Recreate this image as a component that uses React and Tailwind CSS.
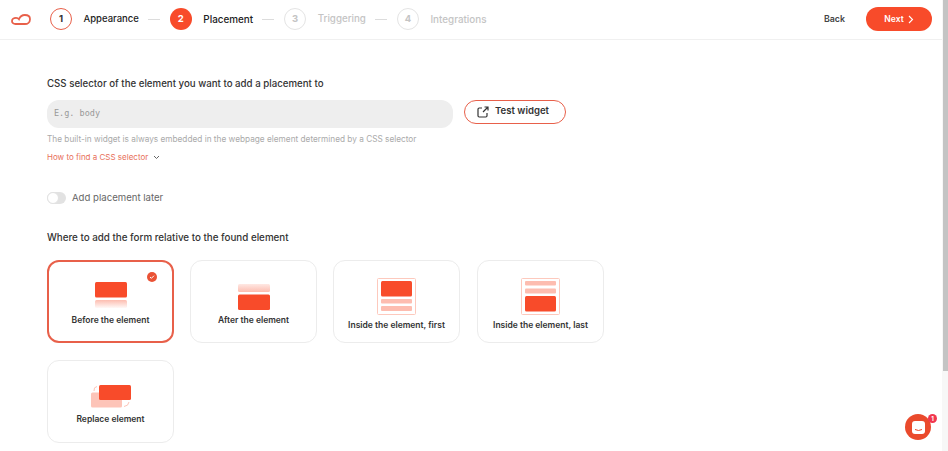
import React from "react";

const F = { fontFamily: '"Inter", "Noto Sans", sans-serif' };

function Step({ n, label, state, size }) {
  const circle =
    state === "done"
      ? "border border-[#e8604a] text-[#333] bg-white"
      : state === "active"
      ? "bg-[#f84b2a] text-white"
      : "border border-[#e4e4e4] text-[#c4c4c4] bg-white";
  const text = state === "todo" ? "text-[#c4c4c4]" : "text-[#222]";
  return (
    <div className="flex items-center">
      <div className={`w-[22px] h-[22px] rounded-full flex items-center justify-center text-[9.5px] font-bold ${circle}`}>{n}</div>
      <span className={`ml-[11.5px] font-medium ${size} ${text}`}>{label}</span>
    </div>
  );
}

function Dash() {
  return <div className="w-[12px] h-[1px] bg-[#dcdcdc] ml-[9px] mr-[10px]" />;
}

function Card({ label, selected, icon, iconGap, labelGap }) {
  return (
    <div
      className={`relative w-[127px] h-[83px] rounded-[12px] bg-white flex flex-col items-center shrink-0 ${
        selected ? "border-2 border-[#e8604a]" : "border border-[#ececec]"
      }`}
    >
      {selected && (
        <div className="absolute top-[10px] right-[15px] w-[10px] h-[10px] rounded-full bg-[#ea5235] flex items-center justify-center">
          <svg width="6" height="6" viewBox="0 0 6 6" fill="none"><path d="M1 3l1.400 1.300L5 1.700" stroke="#fff" strokeWidth="1" /></svg>
        </div>
      )}
      <div className={`flex justify-center ${iconGap}`}>{icon}</div>
      <div className={`text-[8.5px] font-semibold text-[#333] whitespace-nowrap ${labelGap}`}>{label}</div>
    </div>
  );
}

const Before = (
  <svg className="block" width="32" height="27" viewBox="0 0 32 27">
    <defs>
      <linearGradient id="fb" x1="0" y1="0" x2="0" y2="1"><stop offset="0" stopColor="#fdbdb0" /><stop offset="1" stopColor="#fdbdb0" stopOpacity="0.1" /></linearGradient>
    </defs>
    <rect x="0" y="0" width="32" height="15.500" rx="1.500" fill="#f84b2a" />
    <rect x="0" y="18" width="32" height="8" rx="1.500" fill="url(#fb)" />
  </svg>
);
const After = (
  <svg className="block" width="32" height="27" viewBox="0 0 32 27">
    <defs>
      <linearGradient id="fa" x1="0" y1="1" x2="0" y2="0"><stop offset="0" stopColor="#fdbdb0" /><stop offset="1" stopColor="#fdbdb0" stopOpacity="0.35" /></linearGradient>
    </defs>
    <rect x="0" y="0" width="32" height="8" rx="1.500" fill="url(#fa)" />
    <rect x="0" y="10.500" width="32" height="15.500" rx="1.500" fill="#f84b2a" />
  </svg>
);
const First = (
  <svg className="block" width="39" height="37" viewBox="0 0 39 37">
    <rect x="0.500" y="0.500" width="38" height="36" rx="1" fill="#fff" stroke="#fdc9bd" />
    <rect x="4" y="3" width="31" height="15.500" rx="1.500" fill="#f84b2a" />
    <rect x="4" y="21" width="31" height="4.500" rx="1" fill="#fdbdb0" />
    <rect x="4" y="28" width="31" height="5" rx="1" fill="#fdbdb0" />
  </svg>
);
const Last = (
  <svg className="block" width="39" height="37" viewBox="0 0 39 37">
    <rect x="0.500" y="0.500" width="38" height="36" rx="1" fill="#fff" stroke="#fdc9bd" />
    <rect x="4" y="3" width="31" height="4.500" rx="1" fill="#fdbdb0" />
    <rect x="4" y="10.500" width="31" height="5" rx="1" fill="#fdbdb0" />
    <rect x="4" y="18" width="31" height="15.500" rx="1.500" fill="#f84b2a" />
  </svg>
);
const Replace = (
  <svg className="block" width="40" height="23" viewBox="0 0 40 23">
    <rect x="0" y="7.500" width="31" height="15" rx="1.500" fill="#fdc4b8" />
    <rect x="8" y="0" width="32" height="15" rx="1.500" fill="#f84b2a" />
    <path d="M3 6 Q2.500 2 6 1.500" stroke="#fdc4b8" fill="none" strokeWidth="1" />
    <path d="M38 17 Q37.500 21 33 21.500" stroke="#fdc4b8" fill="none" strokeWidth="1" />
  </svg>
);

export default function App() {
  return (
    <div className="relative w-[948px] h-[451px] overflow-hidden bg-white flex" style={F}>
      <div className="w-[942px] h-full flex flex-col shrink-0">
        <header className="h-[40px] border-b border-[#f0f0f0] flex items-center shrink-0 pb-[1px]">
          <svg className="ml-[11px] shrink-0" width="20" height="11" viewBox="0 0 20 11" fill="none">
            <path d="M5 3.800 C6.500 3.800 7.500 4.500 8 5.200 C9 2.600 11 1 13.800 1 C16.800 1 19 2.600 19 5.200 C19 8.200 16.600 10 14 10 L4.500 10 C2.400 10 1 8.800 1 6.900 C1 5 2.800 3.800 5 3.800 Z" stroke="#e8604a" strokeWidth="1.800" />
          </svg>
          <div className="ml-[19px] flex items-center">
            <Step n="1" label="Appearance" state="done" size="text-[9.5px]" />
            <Dash />
            <Step n="2" label="Placement" state="active" size="text-[9.9px]" />
            <Dash />
            <Step n="3" label="Triggering" state="todo" size="text-[9.75px]" />
            <Dash />
            <Step n="4" label="Integrations" state="todo" size="text-[9.85px]" />
          </div>
          <span className="ml-auto text-[8.800px] font-semibold text-[#444]">Back</span>
          <button className="ml-[21px] mr-[10px] w-[66px] h-[24px] rounded-full bg-[#f84b2a] text-white text-[8.500px] font-semibold flex items-center justify-center gap-[4px]">
            Next
            <svg width="6" height="9" viewBox="0 0 6 9" fill="none"><path d="M1 1l3.500 3.500L1 8" stroke="#fff" strokeWidth="1.100" /></svg>
          </button>
        </header>
        <main className="pl-[47px] flex flex-col items-start">
          <div className="mt-[37px] text-[9.700px] font-medium text-[#333] leading-[13px]">CSS selector of the element you want to add a placement to</div>
          <div className="mt-[10px] flex items-start">
            <div className="w-[406px] h-[28px] rounded-[12px] bg-[#eeeeee] flex items-center pl-[7px] pb-[2px] text-[8.500px] text-[#999]" style={{ fontFamily: '"DejaVu Sans Mono", monospace' }}>E.g. body</div>
            <button className="ml-[11px] w-[102px] h-[24px] rounded-full border border-[#e8604a] bg-white flex items-center justify-center gap-[6px] text-[9.600px] font-semibold text-[#333] pb-[1px] pr-[4px]">
              <svg width="12" height="12" viewBox="0 0 12 12" fill="none"><path d="M5 2H2.200A1.200 1.200 0 0 0 1 3.200v6.600A1.200 1.200 0 0 0 2.200 11h6.600A1.200 1.200 0 0 0 10 9.800V7M6 6l5-5M7.500 1H11v3.500" stroke="#333" strokeWidth="1.200" /></svg>
              Test widget
            </button>
          </div>
          <div className="mt-[6px] text-[8.250px] text-[#aaaaaa] leading-[11px]">The built-in widget is always embedded in the webpage element determined by a CSS selector</div>
          <div className="mt-[7px] flex items-center text-[8px] text-[#e8705a] leading-[11px]">
            How to find a CSS selector
            <svg className="ml-[5px]" width="7" height="5" viewBox="0 0 7 5" fill="none"><path d="M1 1l2.500 2.500L6 1" stroke="#666" strokeWidth="1" /></svg>
          </div>
          <div className="mt-[29px] flex items-center leading-[12px]">
            <div className="w-[19px] h-[12px] rounded-full bg-[#e2e2e2] relative">
              <div className="absolute left-0 top-0 w-[12px] h-[12px] rounded-full bg-white border border-[#e2e2e2]" />
            </div>
            <span className="ml-[6px] text-[9.600px] text-[#666]">Add placement later</span>
          </div>
          <div className="mt-[27px] text-[9.800px] font-medium text-[#333] leading-[13px]">Where to add the form relative to the found element</div>
          <div className="mt-[16px] grid grid-cols-[143px_143px_144px_127px] gap-y-[17px]">
            <Card selected label="Before the element" icon={Before} iconGap="mt-[20px]" labelGap="mt-[5px]" />
            <Card label="After the element" icon={After} iconGap="mt-[23px]" labelGap="mt-[3px]" />
            <Card label="Inside the element, first" icon={First} iconGap="mt-[17px]" labelGap="mt-[3.5px]" />
            <Card label="Inside the element, last" icon={Last} iconGap="mt-[17px]" labelGap="mt-[3.5px]" />
            <Card label="Replace element" icon={Replace} iconGap="mt-[24px]" labelGap="mt-[4.5px]" />
          </div>
        </main>
      </div>
      <div className="flex-1 bg-[#f7f7f7]">
        <div className="h-[371px] ml-[1px] bg-[#c4c4c4]" />
      </div>
      <div className="absolute left-[905px] top-[414px] w-[26px] h-[26px] rounded-full bg-[#ea4a2c] flex items-center justify-center">
        <svg width="13" height="13" viewBox="0 0 13 13"><rect x="0" y="0" width="13" height="13" rx="3" fill="#fff" /><path d="M3 8.500 Q6.500 10.500 10 8.500" stroke="#ea4a2c" fill="none" strokeWidth="1" /></svg>
      </div>
      <div className="absolute left-[928px] top-[414px] w-[9px] h-[9px] rounded-full bg-[#f1364e] text-white text-[6px] font-bold flex items-center justify-center">1</div>
    </div>
  );
}
